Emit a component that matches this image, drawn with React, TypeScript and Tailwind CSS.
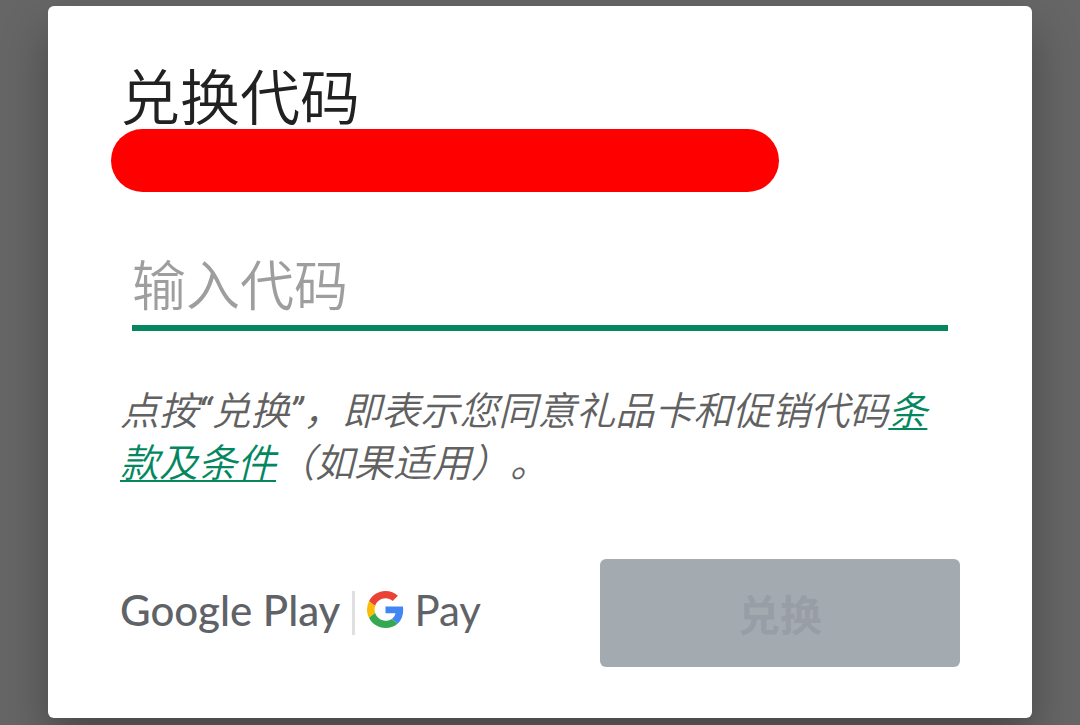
import { useState } from "react";

function GoogleG() {
  return (
    <svg viewBox="0 0 48 48" className="size-[37px] shrink-0" aria-hidden="true">
      <path fill="#EA4335" d="M24 9.5c3.54 0 6.71 1.22 9.21 3.6l6.85-6.85C35.9 2.38 30.47 0 24 0 14.62 0 6.51 5.38 2.56 13.22l7.98 6.19C12.43 13.72 17.74 9.5 24 9.5z" />
      <path fill="#4285F4" d="M46.98 24.55c0-1.57-.15-3.09-.38-4.55H24v9.02h12.94c-.58 2.96-2.26 5.48-4.78 7.18l7.73 6c4.51-4.18 7.09-10.36 7.09-17.65z" />
      <path fill="#FBBC05" d="M10.53 28.59A14.5 14.5 0 0 1 9.77 24c0-1.6.27-3.14.76-4.59l-7.98-6.19A23.9 23.9 0 0 0 0 24c0 3.88.92 7.54 2.56 10.78l7.97-6.19z" />
      <path fill="#34A853" d="M24 48c6.48 0 11.93-2.13 15.89-5.81l-7.73-6c-2.15 1.45-4.92 2.3-8.16 2.3-6.26 0-11.57-4.22-13.47-9.91l-7.98 6.19C6.51 42.62 14.62 48 24 48z" />
    </svg>
  );
}

function Brands() {
  return (
    <div className="flex items-start whitespace-nowrap font-['Lato',sans-serif] text-[42px] leading-[38px] text-[#5f6368]">
      <span className="font-medium">Google Play</span>
      <span className="mx-3 h-11 w-[3px] bg-[#e0e0e0]" />
      <GoogleG />
      <span className="ml-[10px]">Pay</span>
    </div>
  );
}

export default function App() {
  const [code, setCode] = useState("");

  return (
    <div className="min-h-screen overflow-hidden bg-[#666666] px-12 pt-1.5 pb-[7px] font-['Roboto','Noto_Sans_CJK_SC',sans-serif] [text-spacing-trim:space-all]">
      <main
        role="dialog"
        aria-labelledby="title"
        className="rounded-md bg-white px-[72px] pt-16 pb-[51px] shadow-[0_24px_48px_rgba(0,0,0,0.3)]"
      >
        <h1 id="title" className="text-[60px] leading-[59px] font-[350] text-[#212121]">
          兑换代码
        </h1>
        <div className="-ml-[9px] h-[63px] max-w-[668px] rounded-full bg-[#ff0000]" />
        <form onSubmit={(event) => event.preventDefault()}>
          <div className="mt-[55px] px-3">
            <input
              type="text"
              aria-label="输入代码"
              placeholder="输入代码"
              value={code}
              onChange={(event) => setCode(event.target.value)}
              className="block h-[84px] w-full border-b-6 border-[#04875f] bg-transparent pt-0.5 text-[54px] font-[350] text-[#212121] outline-none placeholder:text-[#9e9e9e]"
            />
          </div>
          <p className="mt-[55px] text-[39px] leading-[52px] font-[350] text-[#616161] italic">
            点按<span className="font-normal">“</span>兑换<span className="font-normal">”</span>，即表示您同意礼品卡和促销代码
            <a href="#terms" className="text-[#04875f] underline decoration-2 underline-offset-3">
              条款及条件
            </a>
            （如果适用）。
          </p>
          <div className="mt-[69px] flex items-center justify-between">
            <Brands />
            <button
              type="submit"
              disabled={code === ""}
              className="h-[108px] w-[360px] rounded-md bg-[#a3abb1] pt-1.5 text-[42px] font-bold text-[#999da6]"
            >
              兑换
            </button>
          </div>
        </form>
      </main>
    </div>
  );
}
